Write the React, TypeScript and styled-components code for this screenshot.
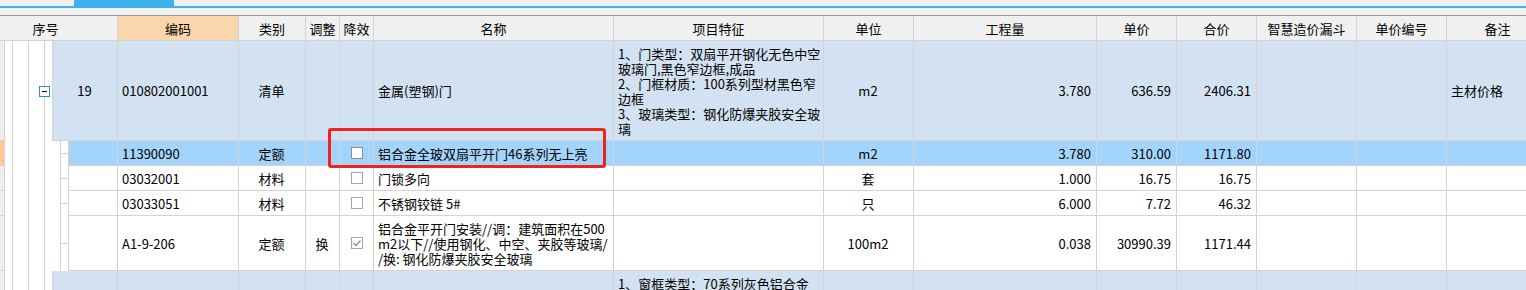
import React from "react";
import styled, { createGlobalStyle } from "styled-components";

const LINE = "#d3d3d3";

const GlobalStyle = createGlobalStyle`
  *, *::before, *::after { box-sizing: border-box; }
  html, body { margin: 0; padding: 0; overflow: hidden; background: #fff; }
  body {
    font-family: "Noto Sans CJK SC", "Noto Sans", sans-serif;
    font-size: 13px;
    color: #000;
  }
`;

type Align = "left" | "center" | "right";
type Kind = "parent" | "active" | "plain";

interface Col {
  title: string;
  w: number;
  align: Align;
  top?: boolean;
  orange?: boolean;
}

const COLS: Col[] = [
  { title: "编码", w: 121, align: "left", orange: true },
  { title: "类别", w: 67, align: "center" },
  { title: "调整", w: 34, align: "center" },
  { title: "降效", w: 34, align: "center" },
  { title: "名称", w: 240, align: "left" },
  { title: "项目特征", w: 210, align: "left", top: true },
  { title: "单位", w: 90, align: "center" },
  { title: "工程量", w: 183, align: "right" },
  { title: "单价", w: 80, align: "right" },
  { title: "合价", w: 80, align: "right" },
  { title: "智慧造价漏斗", w: 100, align: "center" },
  { title: "单价编号", w: 90, align: "center" },
  { title: "备注", w: 102, align: "left" },
];

interface Row {
  level: 0 | 1;
  kind: Kind;
  h: number;
  seq?: string;
  code?: string;
  type?: string;
  adj?: string;
  eff?: "off" | "on";
  name?: string[];
  feat?: string[];
  unit?: string;
  qty?: string;
  price?: string;
  total?: string;
  note?: string;
  open?: boolean;
}

const ROWS: Row[] = [
  {
    level: 0,
    kind: "parent",
    h: 100,
    seq: "19",
    code: "010802001001",
    type: "清单",
    name: ["金属(塑钢)门"],
    feat: [
      "1、门类型：双扇平开钢化无色中空",
      "玻璃门,黑色窄边框,成品",
      "2、门框材质：100系列型材黑色窄",
      "边框",
      "3、玻璃类型：钢化防爆夹胶安全玻",
      "璃",
    ],
    unit: "m2",
    qty: "3.780",
    price: "636.59",
    total: "2406.31",
    note: "主材价格",
    open: true,
  },
  {
    level: 1,
    kind: "active",
    h: 25,
    code: "11390090",
    type: "定额",
    eff: "off",
    name: ["铝合金全玻双扇平开门46系列无上亮"],
    unit: "m2",
    qty: "3.780",
    price: "310.00",
    total: "1171.80",
  },
  {
    level: 1,
    kind: "plain",
    h: 25,
    code: "03032001",
    type: "材料",
    eff: "off",
    name: ["门锁多向"],
    unit: "套",
    qty: "1.000",
    price: "16.75",
    total: "16.75",
  },
  {
    level: 1,
    kind: "plain",
    h: 25,
    code: "03033051",
    type: "材料",
    eff: "off",
    name: ["不锈钢铰链 5#"],
    unit: "只",
    qty: "6.000",
    price: "7.72",
    total: "46.32",
  },
  {
    level: 1,
    kind: "plain",
    h: 55,
    code: "A1-9-206",
    type: "定额",
    adj: "换",
    eff: "on",
    name: [
      "铝合金平开门安装//调：建筑面积在500",
      "m2以下//使用钢化、中空、夹胶等玻璃/",
      "/换: 钢化防爆夹胶安全玻璃",
    ],
    unit: "100m2",
    qty: "0.038",
    price: "30990.39",
    total: "1171.44",
  },
  {
    // next bill item, only its first feature line is in view
    level: 0,
    kind: "parent",
    h: 100,
    feat: ["1、窗框类型：70系列灰色铝合金"],
  },
];

function App() {
  return (
    <Page>
      <GlobalStyle />
      <TabStrip>
        <Tab $w={74}>
          <TabLabel>工程概况</TabLabel>
        </Tab>
        <Tab $w={100} $active>
          <TabLabel>分部分项</TabLabel>
        </Tab>
      </TabStrip>
      <Gap />
      <Sheet>
        <HeadRow>
          <HeadCell $w={118} $pr={26}>
            序号
          </HeadCell>
          {COLS.map((c) => (
            <HeadCell key={c.title} $w={c.w} $orange={c.orange}>
              {c.title}
            </HeadCell>
          ))}
        </HeadRow>
        {ROWS.map((r, i) => (
          <GridRow key={i} $h={r.h}>
            <RowHead $active={r.kind === "active"} />
            <Guide $w={8} $line />
            <Guide $w={16} $line />
            <Guide $w={16} $line>
              {r.open && <Toggle />}
            </Guide>
            {r.level === 1 && <Guide $w={16} $line />}
            <Guide $w={7} $tick={r.level === 1} />
            <Content $kind={r.kind}>
              <Cell $w={r.level === 0 ? 65 : 49} $align="center">
                {r.seq}
              </Cell>
              <Cell $w={COLS[0].w} $align="left">
                {r.code}
              </Cell>
              <Cell $w={COLS[1].w} $align="center">
                {r.type}
              </Cell>
              <Cell $w={COLS[2].w} $align="center">
                {r.adj}
              </Cell>
              <Cell $w={COLS[3].w} $align="center">
                {r.eff && (
                  <Check $dark={r.kind === "active"}>
                    {r.eff === "on" && (
                      <svg width="10" height="10" viewBox="0 0 10 10">
                        <polyline
                          points="1.5,5 4,7.5 8.5,2.5"
                          fill="none"
                          stroke="#8c8c8c"
                          strokeWidth="1.3"
                        />
                      </svg>
                    )}
                  </Check>
                )}
              </Cell>
              <Cell $w={COLS[4].w} $align="left">
                <Lines>
                  {(r.name || []).map((l) => (
                    <Line key={l}>{l}</Line>
                  ))}
                </Lines>
              </Cell>
              <Cell $w={COLS[5].w} $align="left" $top>
                <Lines>
                  {(r.feat || []).map((l) => (
                    <Line key={l}>{l}</Line>
                  ))}
                </Lines>
              </Cell>
              <Cell $w={COLS[6].w} $align="center">
                {r.unit}
              </Cell>
              <Cell $w={COLS[7].w} $align="right">
                {r.qty}
              </Cell>
              <Cell $w={COLS[8].w} $align="right">
                {r.price}
              </Cell>
              <Cell $w={COLS[9].w} $align="right">
                {r.total}
              </Cell>
              <Cell $w={COLS[10].w} $align="center" />
              <Cell $w={COLS[11].w} $align="center" />
              <Cell $w={COLS[12].w} $align="left">
                {r.note}
              </Cell>
            </Content>
          </GridRow>
        ))}
      </Sheet>
      <Mark />
    </Page>
  );
}

export default App;

// Style
const Page = styled.div`
  position: relative;
  width: 1526px;
  height: 290px;
  overflow: hidden;
  background: #f0f0f0;
`;

const TabStrip = styled.div`
  display: flex;
  height: 8px;
  border-bottom: 2px solid #3cb2ee;
  overflow: hidden;
`;

const Tab = styled.div<{ $w: number; $active?: boolean }>`
  width: ${(p) => p.$w}px;
  height: 6px;
  overflow: hidden;
  display: flex;
  justify-content: center;
  background: ${(p) => (p.$active ? "#3cb2ee" : "transparent")};
  color: ${(p) => (p.$active ? "#fff" : "#333")};
`;

const TabLabel = styled.span`
  font-size: 13px;
  line-height: 15px;
  margin-top: -15px;
`;

const Gap = styled.div`
  height: 7px;
`;

const Sheet = styled.div`
  background: #fff;
  border-top: 1px solid #9b9b9b;
`;

const HeadRow = styled.div`
  display: flex;
  height: 25px;
  background: #f0f0f0;
  border-bottom: 1px solid ${LINE};
`;

const HeadCell = styled.div<{ $w: number; $orange?: boolean; $pr?: number }>`
  flex: none;
  width: ${(p) => p.$w}px;
  display: flex;
  align-items: center;
  justify-content: center;
  padding-right: ${(p) => p.$pr || 0}px;
  border-right: 1px solid ${LINE};
  background: ${(p) => (p.$orange ? "#fbd5ab" : "transparent")};
  font-size: 13px;
  white-space: nowrap;
  overflow: hidden;
`;

const GridRow = styled.div<{ $h: number }>`
  display: flex;
  height: ${(p) => p.$h}px;
`;

const RowHead = styled.div<{ $active?: boolean }>`
  flex: none;
  width: 5px;
  background: ${(p) => (p.$active ? "#fcc891" : "#eeeeee")};
  border-right: 1px solid ${LINE};
  border-bottom: 1px solid ${LINE};
`;

const Guide = styled.div<{ $w: number; $line?: boolean; $tick?: boolean }>`
  flex: none;
  width: ${(p) => p.$w}px;
  display: flex;
  align-items: center;
  justify-content: flex-end;
  border-right: ${(p) => (p.$line ? `1px solid ${LINE}` : "none")};
  background: ${(p) =>
    p.$tick ? `linear-gradient(${LINE}, ${LINE}) center / 100% 1px no-repeat` : "none"};
`;

const Toggle = styled.div`
  width: 11px;
  height: 11px;
  margin-right: -6px;
  border: 1px solid #2a8bd3;
  background: #fff;
  display: flex;
  align-items: center;
  justify-content: center;

  &::after {
    content: "";
    width: 5px;
    height: 1px;
    background: #000;
  }
`;

const ROW_BG: Record<Kind, string> = {
  parent: "#d3e2f2",
  active: "#a3d5fc",
  plain: "#ffffff",
};

const Content = styled.div<{ $kind: Kind }>`
  flex: none;
  display: flex;
  border-left: 1px solid ${LINE};
  border-bottom: 1px solid ${LINE};
  background: ${(p) => ROW_BG[p.$kind]};
`;

const JUSTIFY: Record<Align, string> = {
  left: "flex-start",
  center: "center",
  right: "flex-end",
};

const Cell = styled.div<{ $w: number; $align: Align; $top?: boolean }>`
  flex: none;
  width: ${(p) => p.$w}px;
  display: flex;
  align-items: ${(p) => (p.$top ? "flex-start" : "center")};
  justify-content: ${(p) => JUSTIFY[p.$align]};
  padding: ${(p) => (p.$top ? "5px" : "0")} 5px 0 4px;
  border-right: 1px solid ${LINE};
  font-size: 13px;
  line-height: 15px;
  white-space: nowrap;
  overflow: hidden;
`;

const Lines = styled.div`
  display: flex;
  flex-direction: column;
`;

const Line = styled.div`
  height: 15px;
  line-height: 15px;
`;

const Check = styled.div<{ $dark?: boolean }>`
  width: 12px;
  height: 12px;
  margin-left: 1px;
  border: 1px solid ${(p) => (p.$dark ? "#8f8f8f" : "#a5a5a5")};
  background: #fff;
  display: flex;
  align-items: center;
  justify-content: center;
`;

const Mark = styled.div`
  position: absolute;
  left: 328px;
  top: 128px;
  width: 278px;
  height: 40px;
  border: 3px solid #f1241b;
  border-radius: 3px;
  pointer-events: none;
`;
